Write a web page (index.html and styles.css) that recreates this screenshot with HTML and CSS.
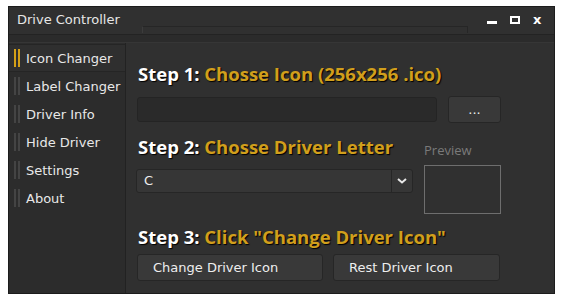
FILE: index.html
```html
<!DOCTYPE html>
<html>
<head>
    <title>Drive Controller</title>
    <link rel="stylesheet" href="styles.css">
</head>
<body>
    <div class="window">
        <div class="titlebar">
            <span class="title">Drive Controller</span>
            <span class="groove"></span>
            <div class="controls">
                <span class="ctl min"></span>
                <span class="ctl max"></span>
                <span class="ctl close">x</span>
            </div>
        </div>
        <div class="strip"></div>
        <div class="main">
            <ul class="sidebar">
                <li class="active"><span class="bars"></span>Icon Changer</li>
                <li><span class="bars"></span>Label Changer</li>
                <li><span class="bars"></span>Driver Info</li>
                <li><span class="bars"></span>Hide Driver</li>
                <li><span class="bars"></span>Settings</li>
                <li><span class="bars"></span>About</li>
            </ul>
            <div class="content">
                <h3 class="step">Step 1: <span>Chosse Icon (256x256 .ico)</span></h3>
                <div class="row">
                    <input type="text" class="path">
                    <button class="btn browse">...</button>
                </div>
                <div class="row2">
                    <div class="left">
                        <h3 class="step">Step 2: <span>Chosse Driver Letter</span></h3>
                        <div class="select">
                            <span class="val">C</span>
                            <span class="arrow">
                                <svg width="10" height="6" viewBox="0 0 10 6"><path d="M1 1 L5 4.5 L9 1" fill="none" stroke="#e8e8e8" stroke-width="2"/></svg>
                            </span>
                        </div>
                    </div>
                    <div class="preview">
                        <div class="plabel">Preview</div>
                        <div class="pbox"></div>
                    </div>
                </div>
                <h3 class="step s3">Step 3: <span>Click "Change Driver Icon"</span></h3>
                <div class="row btns">
                    <button class="btn wide">Change Driver Icon</button>
                    <button class="btn wide">Rest Driver Icon</button>
                </div>
            </div>
        </div>
    </div>
</body>
</html>
```
FILE: styles.css
```css
body { margin: 0; background: #fff; font-family: "DejaVu Sans", sans-serif; }
.window {
    margin: 6px 0 0 8px; width: 547px; height: 288px;
    background: #2c2c2c; border: 1px solid #1c1c1c; box-sizing: border-box;
    display: flex; flex-direction: column;
}
.titlebar {
    height: 27px; background: #303030; display: flex; align-items: center;
    border-bottom: 1px solid #232323;
}
.title { color: #e6e6e6; font-size: 13px; padding-left: 8px; width: 125px; margin-top: -2px; }
.groove {
    width: 324px; height: 6px; margin-top: 18px;
    border-top: 1px solid #262626; border-right: 1px solid #262626;
    border-left: 1px solid #3c3c3c;
}
.controls { display: flex; align-items: center; gap: 13px; margin-left: 19px; margin-top: -2px; }
.ctl { display: block; }
.min { width: 10px; height: 3px; background: #fff; margin-top: 5px; }
.max { width: 6px; height: 4px; border: 2px solid #fff; }
.close { color: #fff; font-weight: bold; font-size: 13px; line-height: 10px; }
.strip { height: 7px; background: #2b2b2b; border-bottom: 1px solid #363636; }
.main { flex: 1; display: flex; }
.sidebar {
    list-style: none; margin: 0; padding: 1px 0 0; width: 116px;
    background: #2c2c2c; border-right: 1px solid #222;
}
.sidebar li {
    height: 28px; display: flex; align-items: center; color: #e8e8e8; font-size: 13px;
}
.sidebar li.active { background: #2f2f2f; border-top: 1px solid #252525; border-bottom: 1px solid #252525; height: 26px; }
.bars { height: 18px; margin: 0 6px 0 5px; border-left: 2px solid #444; border-right: 2px solid #444; width: 2px; }
.active .bars { border-color: #d4a017; }
.content { flex: 1; background: #303030; padding: 19px 0 0 11px; }
.step {
    margin: 0; padding-left: 1px; font-family: "Open Sans", sans-serif; font-weight: bold;
    font-size: 18.5px; color: #fff; text-shadow: 1px 1px 1px #000; line-height: 24px;
}
.step span { color: #d19f1c; }
.row { display: flex; gap: 11px; margin-top: 10px; }
.path { width: 300px; height: 25px; margin-top: 1px; background: #2a2a2a; border: 1px solid #242424; border-radius: 3px; box-sizing: border-box; }
.btn {
    background: #393939; border: 1px solid #262626; border-radius: 3px; color: #eee;
    font-family: "DejaVu Sans", sans-serif; font-size: 13px;
}
.browse { width: 53px; height: 27px; line-height: 10px; }
.row2 { display: flex; margin-top: 12px; }
.left { width: 287px; }
.select {
    display: flex; width: 277px; height: 24px; margin: 10px 0 0 -1px; background: #363636;
    border: 1px solid #262626; border-radius: 3px; box-sizing: border-box;
}
.val { flex: 1; color: #eee; font-size: 13px; padding: 3px 0 0 7px; }
.arrow { width: 20px; border-left: 1px solid #262626; display: flex; align-items: center; justify-content: center; }
.plabel { color: #7a7a7a; font-family: "Open Sans", sans-serif; font-size: 13px; line-height: 18px; margin-top: 6px; }
.pbox { width: 77px; height: 49px; border: 1px solid #6e6e6e; margin-top: 6px; box-sizing: border-box; }
.s3 { margin-top: 11px; }
.btns { gap: 10px; margin-top: 5px; }
.btns .wide { height: 27px; width: 186px; text-align: left; padding-left: 15px; }
.btns .wide + .wide { width: 167px; }
```
